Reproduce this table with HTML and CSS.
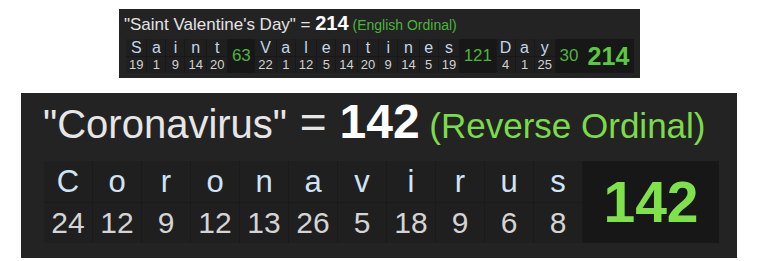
FILE: index.html
```html
<!DOCTYPE html>
<html>
<head>
<meta charset="utf-8">
<link rel="stylesheet" href="styles.css">
</head>
<body>
<div class="page">
  <div class="panel small">
    <div class="title"><span class="q">"Saint Valentine's Day" = </span><b class="num">214</b><span class="ci"> (English Ordinal)</span></div>
    <div class="table">
      <div class="col"><span class="l">S</span><span class="n">19</span></div>
      <div class="col"><span class="l">a</span><span class="n">1</span></div>
      <div class="col"><span class="l">i</span><span class="n">9</span></div>
      <div class="col"><span class="l">n</span><span class="n">14</span></div>
      <div class="col"><span class="l">t</span><span class="n">20</span></div>
      <div class="sub">63</div>
      <div class="col"><span class="l">V</span><span class="n">22</span></div>
      <div class="col"><span class="l">a</span><span class="n">1</span></div>
      <div class="col"><span class="l">l</span><span class="n">12</span></div>
      <div class="col"><span class="l">e</span><span class="n">5</span></div>
      <div class="col"><span class="l">n</span><span class="n">14</span></div>
      <div class="col"><span class="l">t</span><span class="n">20</span></div>
      <div class="col"><span class="l">i</span><span class="n">9</span></div>
      <div class="col"><span class="l">n</span><span class="n">14</span></div>
      <div class="col"><span class="l">e</span><span class="n">5</span></div>
      <div class="col"><span class="l">s</span><span class="n">19</span></div>
      <div class="sub">121</div>
      <div class="col"><span class="l">D</span><span class="n">4</span></div>
      <div class="col"><span class="l">a</span><span class="n">1</span></div>
      <div class="col"><span class="l">y</span><span class="n">25</span></div>
      <div class="sub">30</div>
      <div class="total">214</div>
    </div>
  </div>

  <div class="panel big">
    <div class="title"><span class="q">"Coronavirus"</span><span class="eq"> = </span><b class="num">142</b><span class="ci"> (Reverse Ordinal)</span></div>
    <div class="grid">
      <span class="l">C</span><span class="l">o</span><span class="l">r</span><span class="l">o</span><span class="l">n</span><span class="l">a</span><span class="l">v</span><span class="l">i</span><span class="l">r</span><span class="l">u</span><span class="l">s</span>
      <span class="total">142</span>
      <span class="n">24</span><span class="n">12</span><span class="n">9</span><span class="n">12</span><span class="n">13</span><span class="n">26</span><span class="n">5</span><span class="n">18</span><span class="n">9</span><span class="n">6</span><span class="n">8</span>
    </div>
  </div>
</div>
</body>
</html>
```

FILE: styles.css
```css
* { box-sizing: border-box; }
html, body { margin: 0; padding: 0; background: #ffffff; }
body { font-family: "Liberation Sans", Arial, sans-serif; }

.page { display: flex; flex-direction: column; align-items: flex-start; }

.panel { background: #232323; }

/* ---------- small panel ---------- */
.small {
  margin: 9px 0 0 119px;
  width: 521px;
  height: 69px;
}
.small .title {
  height: 30px;
  padding: 4px 0 0 5px;
  white-space: nowrap;
  line-height: 1;
}
.small .title span, .small .title b { line-height: 1; }
.small .q { font-size: 17px; color: #e4e4e4; }
.small .num { font-size: 20px; color: #ffffff; font-weight: bold; }
.small .ci { font-size: 14px; color: #4db43b; }

.small .table {
  margin-left: 7px;
  width: 508px;
  height: 34px;
  display: flex;
  gap: 1px;
  background: #181818;
}
.small .col {
  display: flex;
  flex-direction: column;
  gap: 1px;
}
.small .col .l, .small .col .n {
  display: block;
  min-width: 18px;
  padding: 0 3px;
  text-align: center;
  background: #1f1f1f;
}
.small .col .l { height: 17px; line-height: 17px; font-size: 16px; color: #c4d6e8; }
.small .col .n { height: 16px; line-height: 16px; font-size: 13px; color: #d2d2d2; }
.small .sub {
  padding: 0 3.5px;
  background: #171717;
  color: #4db43b;
  font-size: 17px;
  line-height: 34px;
  text-align: center;
}
.small .total {
  flex: 1;
  background: #171717;
  color: #5bc93d;
  font-size: 25px;
  font-weight: bold;
  line-height: 34px;
  text-align: center;
}

/* ---------- big panel ---------- */
.big {
  margin: 15px 0 0 21px;
  width: 716px;
  height: 165px;
}
.big .title {
  height: 68px;
  padding: 5px 0 0 22px;
  white-space: nowrap;
  display: flex;
  align-items: baseline;
}
.big .title span, .big .title b { line-height: 1; white-space: pre; }
.big .q { font-size: 40px; color: #e6e6e6; }
.big .eq { font-size: 46px; color: #e6e6e6; }
.big .num { font-size: 48px; color: #ffffff; font-weight: bold; }
.big .ci { font-size: 35px; color: #7cdb48; }

.big .grid {
  margin-left: 23px;
  width: 675px;
  height: 82px;
  display: grid;
  grid-template-columns: repeat(11, 48px) 1fr;
  grid-template-rows: 41px 40px;
  gap: 1px;
  background: #1a1a1a;
}
.big .grid .l, .big .grid .n {
  display: block;
  text-align: center;
  background: #1f1f1f;
}
.big .grid .l { font-size: 31px; line-height: 41px; color: #cfe3f6; }
.big .grid .n { font-size: 30px; line-height: 40px; color: #d4d4d4; }
.big .grid .total {
  grid-column: 12;
  grid-row: 1 / span 2;
  background: #171717;
  color: #80e24b;
  font-size: 57px;
  font-weight: bold;
  line-height: 82px;
  text-align: center;
}
```
